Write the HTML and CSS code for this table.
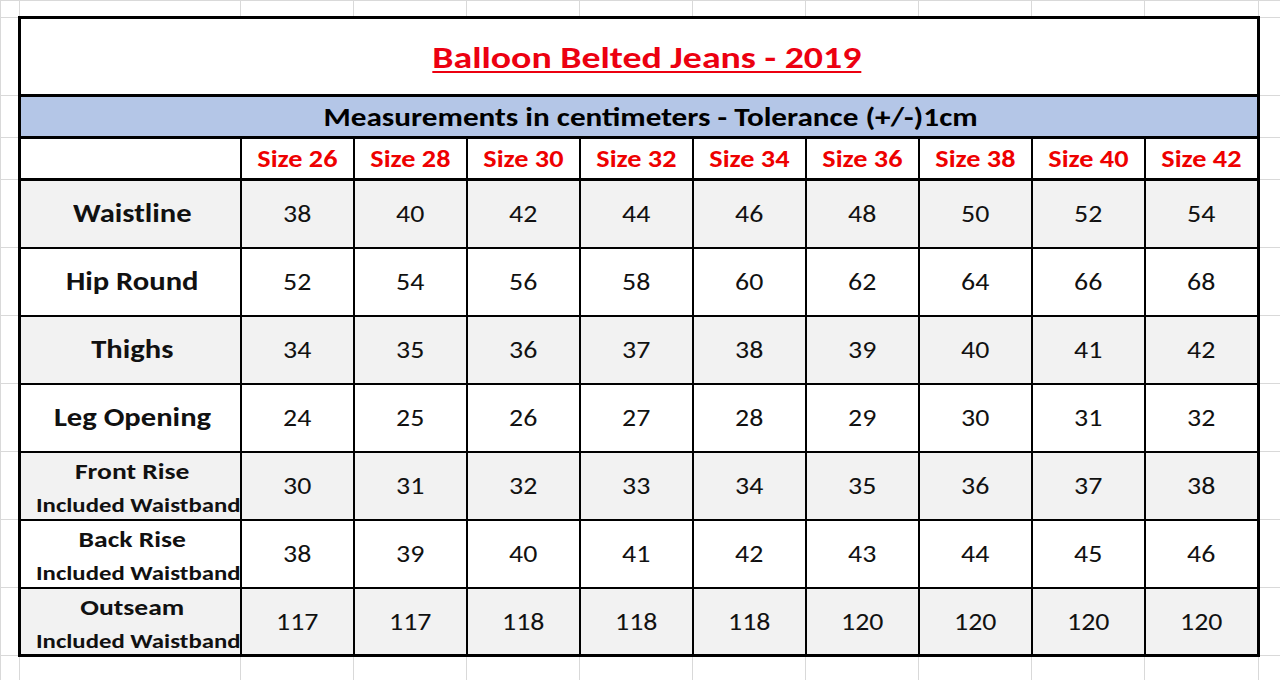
FILE: index.html
```html
<!DOCTYPE html>
<html lang="en">
<head>
<meta charset="utf-8">
<title>Balloon Belted Jeans - 2019</title>
<link rel="stylesheet" href="styles.css">
</head>
<body>
<table class="sheet">
  <colgroup>
    <col class="c-m">
    <col class="c-label">
    <col class="c-d"><col class="c-d"><col class="c-d"><col class="c-d"><col class="c-d"><col class="c-d"><col class="c-d"><col class="c-d">
    <col class="c-last">
    <col class="c-r">
  </colgroup>
  <tr class="r-top">
    <td class="g"></td><td class="g"></td><td class="g"></td><td class="g"></td><td class="g"></td><td class="g"></td><td class="g"></td><td class="g"></td><td class="g"></td><td class="g"></td><td class="g"></td><td class="g"></td>
  </tr>
  <tr class="r-title">
    <td class="g"></td>
    <td colspan="10" class="title"><span class="t">Balloon Belted Jeans - 2019</span></td>
    <td class="g"></td>
  </tr>
  <tr class="r-band">
    <td class="g"></td>
    <td colspan="10" class="band"><span class="t">Measurements in centimeters - Tolerance (+/-)1cm</span></td>
    <td class="g"></td>
  </tr>
  <tr class="r-head">
    <td class="g"></td>
    <td class="blank"></td>
    <th class="size"><span class="t">Size 26</span></th><th class="size"><span class="t">Size 28</span></th><th class="size"><span class="t">Size 30</span></th><th class="size"><span class="t">Size 32</span></th><th class="size"><span class="t">Size 34</span></th><th class="size"><span class="t">Size 36</span></th><th class="size"><span class="t">Size 38</span></th><th class="size"><span class="t">Size 40</span></th><th class="size last"><span class="t">Size 42</span></th>
    <td class="g"></td>
  </tr>
  <tr class="r-data alt">
    <td class="g"></td>
    <th class="label"><span class="t">Waistline</span></th>
    <td class="num"><span class="t">38</span></td><td class="num"><span class="t">40</span></td><td class="num"><span class="t">42</span></td><td class="num"><span class="t">44</span></td><td class="num"><span class="t">46</span></td><td class="num"><span class="t">48</span></td><td class="num"><span class="t">50</span></td><td class="num"><span class="t">52</span></td><td class="num last"><span class="t">54</span></td>
    <td class="g"></td>
  </tr>
  <tr class="r-data">
    <td class="g"></td>
    <th class="label"><span class="t">Hip Round</span></th>
    <td class="num"><span class="t">52</span></td><td class="num"><span class="t">54</span></td><td class="num"><span class="t">56</span></td><td class="num"><span class="t">58</span></td><td class="num"><span class="t">60</span></td><td class="num"><span class="t">62</span></td><td class="num"><span class="t">64</span></td><td class="num"><span class="t">66</span></td><td class="num last"><span class="t">68</span></td>
    <td class="g"></td>
  </tr>
  <tr class="r-data alt">
    <td class="g"></td>
    <th class="label"><span class="t">Thighs</span></th>
    <td class="num"><span class="t">34</span></td><td class="num"><span class="t">35</span></td><td class="num"><span class="t">36</span></td><td class="num"><span class="t">37</span></td><td class="num"><span class="t">38</span></td><td class="num"><span class="t">39</span></td><td class="num"><span class="t">40</span></td><td class="num"><span class="t">41</span></td><td class="num last"><span class="t">42</span></td>
    <td class="g"></td>
  </tr>
  <tr class="r-data">
    <td class="g"></td>
    <th class="label"><span class="t">Leg Opening</span></th>
    <td class="num"><span class="t">24</span></td><td class="num"><span class="t">25</span></td><td class="num"><span class="t">26</span></td><td class="num"><span class="t">27</span></td><td class="num"><span class="t">28</span></td><td class="num"><span class="t">29</span></td><td class="num"><span class="t">30</span></td><td class="num"><span class="t">31</span></td><td class="num last"><span class="t">32</span></td>
    <td class="g"></td>
  </tr>
  <tr class="r-data alt">
    <td class="g"></td>
    <th class="label two"><span class="t main">Front Rise</span><span class="t sub">Included Waistband</span></th>
    <td class="num"><span class="t">30</span></td><td class="num"><span class="t">31</span></td><td class="num"><span class="t">32</span></td><td class="num"><span class="t">33</span></td><td class="num"><span class="t">34</span></td><td class="num"><span class="t">35</span></td><td class="num"><span class="t">36</span></td><td class="num"><span class="t">37</span></td><td class="num last"><span class="t">38</span></td>
    <td class="g"></td>
  </tr>
  <tr class="r-data">
    <td class="g"></td>
    <th class="label two"><span class="t main">Back Rise</span><span class="t sub">Included Waistband</span></th>
    <td class="num"><span class="t">38</span></td><td class="num"><span class="t">39</span></td><td class="num"><span class="t">40</span></td><td class="num"><span class="t">41</span></td><td class="num"><span class="t">42</span></td><td class="num"><span class="t">43</span></td><td class="num"><span class="t">44</span></td><td class="num"><span class="t">45</span></td><td class="num last"><span class="t">46</span></td>
    <td class="g"></td>
  </tr>
  <tr class="r-data alt end">
    <td class="g"></td>
    <th class="label two"><span class="t main">Outseam</span><span class="t sub">Included Waistband</span></th>
    <td class="num"><span class="t">117</span></td><td class="num"><span class="t">117</span></td><td class="num"><span class="t">118</span></td><td class="num"><span class="t">118</span></td><td class="num"><span class="t">118</span></td><td class="num"><span class="t">120</span></td><td class="num"><span class="t">120</span></td><td class="num"><span class="t">120</span></td><td class="num last"><span class="t">120</span></td>
    <td class="g"></td>
  </tr>
  <tr class="r-bottom">
    <td class="g"></td><td class="g"></td><td class="g"></td><td class="g"></td><td class="g"></td><td class="g"></td><td class="g"></td><td class="g"></td><td class="g"></td><td class="g"></td><td class="g"></td><td class="g"></td>
  </tr>
</table>
</body>
</html>
```

FILE: styles.css
```css
html, body {
  margin: 0;
  padding: 0;
  background: #ffffff;
}

body {
  width: 1280px;
  height: 680px;
  overflow: hidden;
  font-family: Carlito, Lato, "Open Sans", sans-serif;
  color: #111111;
}

.sheet {
  border-collapse: collapse;
  table-layout: fixed;
  width: 1280px;
}

.c-m { width: 19px; }
.c-label { width: 221px; }
.c-d { width: 113px; }
.c-last { width: 114px; }
.c-r { width: 22px; }

.r-top { height: 17px; }
.r-title { height: 78px; }
.r-band { height: 42px; }
.r-head { height: 42px; }
.r-data { height: 68px; }
.r-bottom { height: 40px; }

.sheet td,
.sheet th {
  padding: 0;
  text-align: center;
  vertical-align: middle;
  border: 2px solid #000000;
  background: #ffffff;
  white-space: nowrap;
}

.sheet td.g {
  border: 1px solid #d9d9d9;
  background: #ffffff;
}

/* text is drawn wider than the font's natural width, like the stretched sheet */
.t {
  display: inline-block;
  transform: scaleX(1.2);
  transform-origin: center;
}

.title {
  border: 3px solid #000000 !important;
  padding-left: 15px !important;
  font-size: 31px;
  font-weight: 700;
  color: #ec0010;
}

.title .t {
  transform: scaleX(1.22);
  text-decoration: underline;
  text-decoration-thickness: 2px;
  text-underline-offset: 3px;
}

.band {
  border: 3px solid #000000 !important;
  background: #b4c6e7 !important;
  padding-left: 24px !important;
  font-size: 26px;
  font-weight: 700;
  color: #000000;
}

.r-head td,
.r-head th {
  border-top-width: 3px;
  border-bottom-width: 3px;
}

.blank {
  border-left-width: 3px !important;
}

.size {
  font-size: 23.5px;
  font-weight: 700;
  color: #ee0000;
}

.label {
  border-left-width: 3px !important;
  padding-left: 4px !important;
  font-size: 25.5px;
  font-weight: 700;
  color: #111111;
}

.label.two {
  line-height: 1;
  padding-top: 5px !important;
}

.label .main,
.label .sub {
  display: block;
}

.label .main {
  font-size: 23px;
  margin-bottom: 12px;
}

.label .sub {
  font-size: 21px;
  transform: scaleX(1.18);
  margin-left: 6px;
  margin-right: -6px;
}

.num {
  font-size: 24px;
  font-weight: 400;
  color: #111111;
}

.num .t {
  transform: scaleX(1.16);
}

.last {
  border-right-width: 3px !important;
}

.alt td:not(.g),
.alt th {
  background: #f2f2f2;
}

.end td:not(.g),
.end th {
  border-bottom-width: 3px;
}
```
